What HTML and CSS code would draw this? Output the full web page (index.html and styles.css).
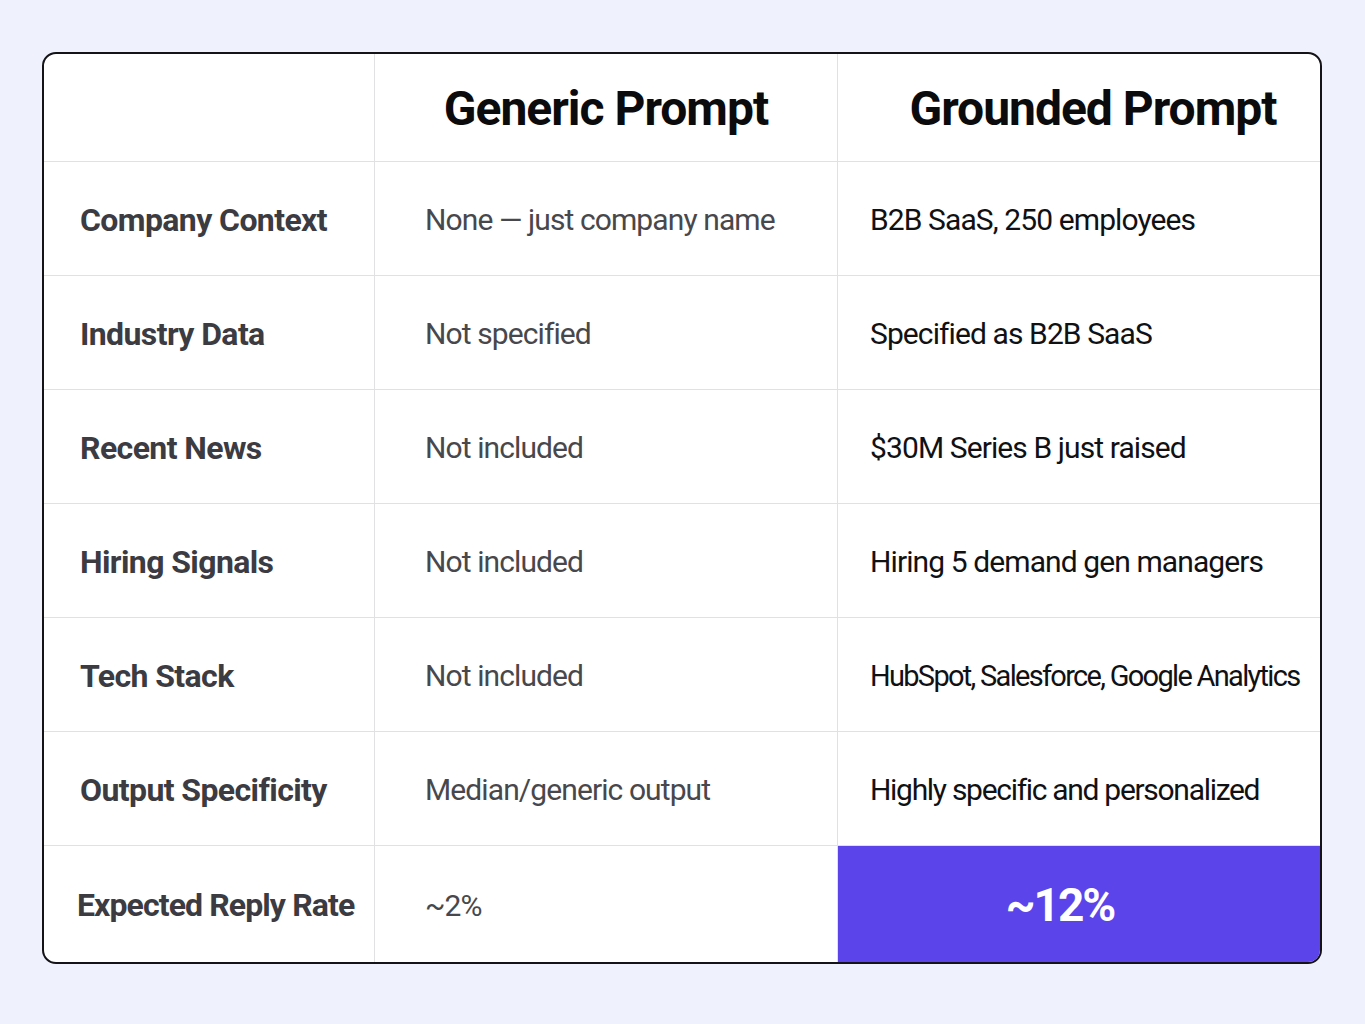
FILE: index.html
```html
<!DOCTYPE html>
<html lang="en">
<head>
<meta charset="utf-8">
<title>Generic vs Grounded Prompt</title>
<link rel="stylesheet" href="styles.css">
</head>
<body>
<div class="table">
  <div class="cell head blank"></div>
  <div class="cell head">Generic Prompt</div>
  <div class="cell head last">Grounded Prompt</div>

  <div class="cell label">Company Context</div>
  <div class="cell generic">None — just company name</div>
  <div class="cell grounded">B2B SaaS, 250 employees</div>

  <div class="cell label">Industry Data</div>
  <div class="cell generic">Not specified</div>
  <div class="cell grounded">Specified as B2B SaaS</div>

  <div class="cell label">Recent News</div>
  <div class="cell generic">Not included</div>
  <div class="cell grounded">$30M Series B just raised</div>

  <div class="cell label">Hiring Signals</div>
  <div class="cell generic">Not included</div>
  <div class="cell grounded">Hiring 5 demand gen managers</div>

  <div class="cell label">Tech Stack</div>
  <div class="cell generic">Not included</div>
  <div class="cell grounded tight">HubSpot, Salesforce, Google Analytics</div>

  <div class="cell label">Output Specificity</div>
  <div class="cell generic">Median/generic output</div>
  <div class="cell grounded semi">Highly specific and personalized</div>

  <div class="cell label final tightlabel">Expected Reply Rate</div>
  <div class="cell generic final">~2%</div>
  <div class="cell highlight final">~12%</div>
</div>
</body>
</html>
```

FILE: styles.css
```css
html, body {
  margin: 0;
  background: #eff2fc;
}
body {
  padding: 52px 0 0 42px;
  font-family: Roboto, "Liberation Sans", sans-serif;
}
.table {
  width: 1276px;
  height: 908px;
  border: 2px solid #141418;
  border-radius: 14px;
  background: #ffffff;
  overflow: hidden;
  display: grid;
  grid-template-columns: 331px 463px 1fr;
  grid-template-rows: 108px repeat(6, 1fr) 116px;
}
.cell {
  display: flex;
  align-items: center;
  border-bottom: 1px solid #e1e1e4;
  border-right: 1px solid #e1e1e4;
  min-width: 0;
  white-space: nowrap;
}
.cell.last, .grounded, .highlight {
  border-right: none;
}
.cell.final {
  border-bottom: none;
}
.head {
  justify-content: center;
  font-weight: 700;
  font-size: 48px;
  letter-spacing: -1px;
  color: #0b0b0d;
  padding-top: 2px;
}
.head.last {
  padding-left: 28px;
}
.label {
  padding-left: 36px;
  font-weight: 700;
  font-size: 32px;
  letter-spacing: -0.6px;
  color: #3b3b41;
  padding-top: 2px;
}
.label.final {
  padding-left: 33px;
}
.tightlabel {
  letter-spacing: -0.9px;
}
.generic {
  padding-left: 50px;
  font-size: 30px;
  letter-spacing: -0.9px;
  color: #48484c;
  padding-top: 2px;
}
.grounded {
  padding-left: 32px;
  font-size: 30px;
  letter-spacing: -0.9px;
  color: #111114;
  padding-top: 2px;
}
.grounded.semi {
  letter-spacing: -1.3px;
}
.grounded.tight {
  font-size: 29px;
  letter-spacing: -1.7px;
}
.highlight {
  justify-content: center;
  padding-right: 38px;
  padding-top: 2px;
  background: #5b44ea;
  color: #ffffff;
  font-weight: 700;
  font-size: 46px;
  letter-spacing: -2px;
}
```
